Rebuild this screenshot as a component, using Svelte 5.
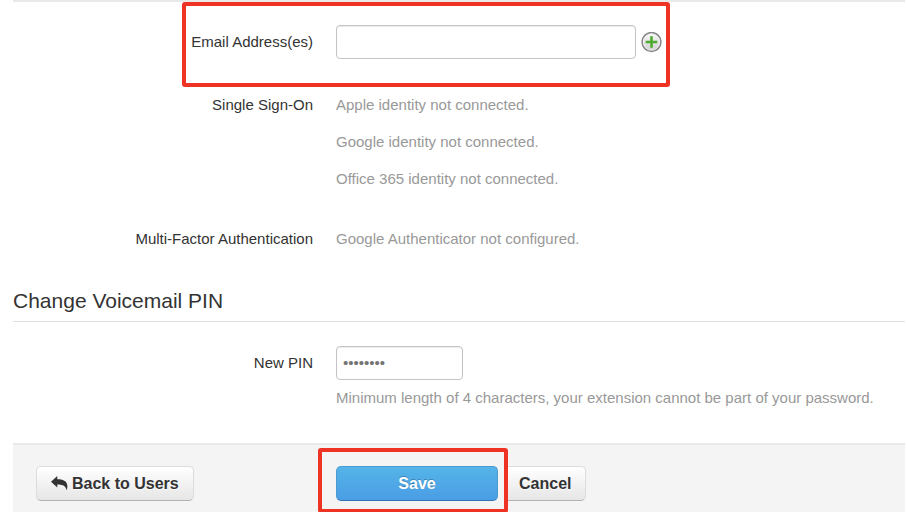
<script>
  /** @type {string[]} */
  let emails = $state([""]);
  let pin = $state("");

  const identities = [
    { provider: "Apple", connected: false },
    { provider: "Google", connected: false },
    { provider: "Office 365", connected: false },
  ];

  const minLength = 4;

  function addEmail() {
    emails.push("");
  }

  function handleSubmit(event) {
    event.preventDefault();
  }
</script>

<form class="user-form" onsubmit={handleSubmit}>
  <div class="row row--email">
    <label class="row__label row__label--input" for="email-0">Email Address(es)</label>
    <div class="row__field row__field--stack">
      {#each emails as _, i}
        <div class="email">
          <input
            id="email-{i}"
            class="text-input text-input--email"
            type="email"
            aria-label={i > 0 ? "Email address" : undefined}
            bind:value={emails[i]}
          />
          {#if i === emails.length - 1}
            <button
              type="button"
              class="add-btn"
              onclick={addEmail}
              aria-label="Add email address"
            >
              <svg viewBox="0 0 21 21" aria-hidden="true">
                <defs>
                  <linearGradient id="add-fill" x1="0" y1="0" x2="0" y2="1">
                    <stop offset="0" stop-color="#fafafa" />
                    <stop offset="1" stop-color="#cfcfcf" />
                  </linearGradient>
                </defs>
                <circle cx="10.5" cy="10" r="9.4" fill="url(#add-fill)" stroke="#868686" stroke-width="1.6" />
                <circle cx="10.5" cy="10" r="8.2" fill="none" stroke="#f4f4f4" stroke-width="0.8" />
                <path d="M10.5 4.2v11.6M4.7 10h11.6" fill="none" stroke="#4eaa30" stroke-width="2.6" />
              </svg>
            </button>
          {/if}
        </div>
      {/each}
    </div>
    <span class="highlight highlight--email"></span>
  </div>

  <div class="row row--sso">
    <div class="row__label">Single Sign-On</div>
    <div class="row__field row__field--stack">
      {#each identities as identity}
        <div class="muted">
          {identity.provider} identity {identity.connected ? "connected" : "not connected"}.
        </div>
      {/each}
    </div>
  </div>

  <div class="row row--mfa">
    <div class="row__label">Multi-Factor Authentication</div>
    <div class="row__field muted">Google Authenticator not configured.</div>
  </div>

  <h2 class="section-title">Change Voicemail PIN</h2>

  <div class="row row--pin">
    <label class="row__label row__label--input" for="pin">New PIN</label>
    <div class="row__field">
      <input
        id="pin"
        class="text-input text-input--pin"
        type="password"
        placeholder="••••••••"
        aria-describedby="pin-hint"
        bind:value={pin}
      />
      <div id="pin-hint" class="muted hint">
        Minimum length of {minLength} characters, your extension cannot be part of your password.
      </div>
    </div>
  </div>

  <div class="row actions">
    <div class="actions__back">
      <button type="button" class="btn">
        <svg class="btn__icon" viewBox="0 0 17 15" fill="currentColor" aria-hidden="true">
          <path d="M6.3 0v3.2C12.6 3.2 18.6 5.4 15.6 14.6 15.3 10.4 12.5 8.4 6.3 8.4v3.2L0 5.8z" />
        </svg>
        Back to Users
      </button>
    </div>
    <div class="actions__main">
      <button type="submit" class="btn btn--primary">Save</button>
      <button type="button" class="btn">Cancel</button>
      <span class="highlight highlight--save"></span>
    </div>
  </div>
</form>

<style>
  :global(body) {
    background: #fff;
  }

  .user-form {
    margin: 0 1px 0 13px;
    border-top: 2px solid #e9e9e9;
    font-family: "Liberation Sans", Arial, sans-serif;
    font-size: 15px;
    line-height: 21px;
    color: #333;
  }

  .row {
    display: grid;
    grid-template-columns: 300px 1fr;
    column-gap: 23px;
  }

  .row--email {
    position: relative;
    padding: 23px 0 35px;
  }

  .row--sso {
    padding-bottom: 39px;
  }

  .row--mfa {
    padding-bottom: 39px;
  }

  .row--pin {
    padding: 24px 0 35px;
  }

  .row__label {
    text-align: right;
  }

  .row__label--input {
    line-height: 34px;
  }

  .row__field--stack {
    display: flex;
    flex-direction: column;
    gap: 16px;
  }

  .muted {
    color: #999;
  }

  .email {
    display: flex;
    align-items: center;
    gap: 5px;
  }

  .text-input {
    box-sizing: border-box;
    display: block;
    height: 34px;
    padding: 0 6px 2px;
    border: 1px solid #c4c4c4;
    border-radius: 4px;
    background: #fff;
    box-shadow: inset 0 1px 1px rgba(0, 0, 0, 0.08);
    font: inherit;
    color: #333;
  }

  .text-input--email {
    width: 300px;
  }

  .text-input--pin {
    width: 127px;
  }

  .text-input::placeholder {
    color: #757575;
    opacity: 1;
  }

  .hint {
    margin-top: 7px;
  }

  .add-btn {
    width: 21px;
    height: 21px;
    padding: 0;
    border: 0;
    background: none;
    cursor: pointer;
  }

  .add-btn svg {
    display: block;
    width: 21px;
    height: 21px;
  }

  .section-title {
    margin: 0;
    padding-bottom: 7px;
    border-bottom: 1px solid #e0e0e0;
    font-size: 21px;
    font-weight: 400;
    line-height: 26px;
  }

  .actions {
    padding: 21px 0 11px;
    border-top: 2px solid #e9e9e9;
    background: #f4f4f4;
  }

  .actions__back {
    padding-left: 23px;
  }

  .actions__main {
    position: relative;
    display: flex;
    gap: 6px;
  }

  .btn {
    box-sizing: border-box;
    display: flex;
    align-items: center;
    justify-content: center;
    height: 35px;
    padding: 0 14px;
    border: 1px solid #dcdcdc;
    border-bottom-color: #b3b3b3;
    border-radius: 5px;
    background: linear-gradient(#fff, #e6e6e6);
    font: inherit;
    font-size: 16px;
    font-weight: 700;
    color: #333;
    text-shadow: 0 1px 1px rgba(255, 255, 255, 0.75);
    cursor: pointer;
  }

  .btn--primary {
    width: 162px;
    border-color: #4a9bd0;
    border-bottom-color: #3474b4;
    background: linear-gradient(#55b4e8, #4a9de4);
    color: #fff;
    text-shadow: 0 -1px 0 rgba(0, 0, 0, 0.25);
  }

  .btn__icon {
    width: 17px;
    height: 15px;
    margin-right: 4px;
  }

  /* red call-out frames drawn over the form */
  .highlight {
    position: absolute;
    box-sizing: border-box;
    border: 4px solid #ee3224;
    border-radius: 3px;
    pointer-events: none;
  }

  .highlight--email {
    top: 0;
    left: 169px;
    width: 488px;
    height: 85px;
  }

  .highlight--save {
    top: -18px;
    left: -18px;
    width: 190px;
    height: 65px;
  }
</style>
